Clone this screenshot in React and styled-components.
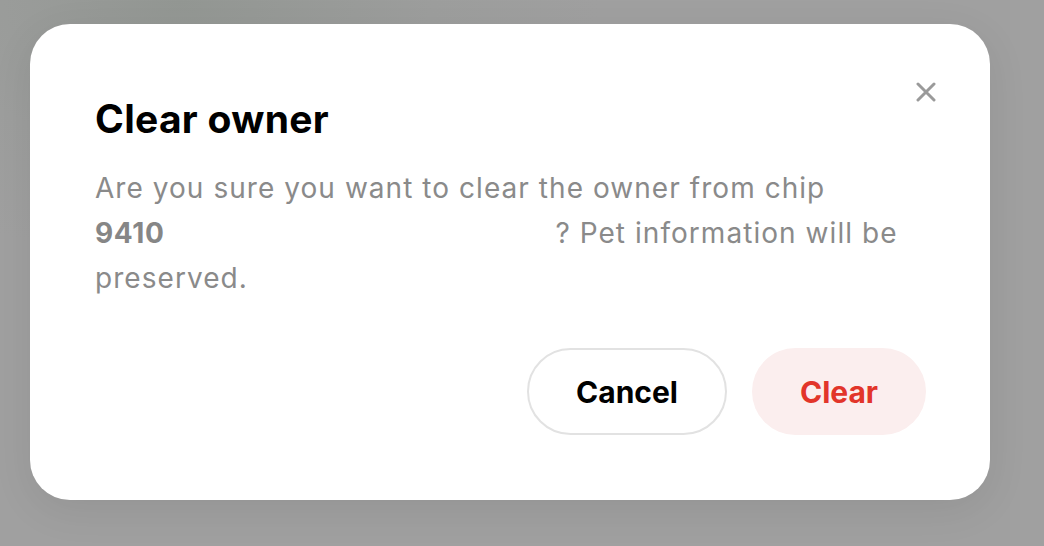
import React from "react";
import styled, { createGlobalStyle } from "styled-components";

const Global = createGlobalStyle`
  html, body { margin: 0; padding: 0; }
  body {
    width: 1044px;
    height: 546px;
    overflow: hidden;
    font-family: Inter, "Noto Sans", sans-serif;
    background: radial-gradient(ellipse 420px 260px at 180px 0px, #939793 0%, #9d9e9d 60%, #a0a0a0 100%), #a0a0a0;
  }
`;

const Backdrop = styled.div`
  width: 1044px;
  height: 546px;
  box-sizing: border-box;
  padding: 24px 0 0 30px;
`;

const Dialog = styled.div`
  position: relative;
  box-sizing: border-box;
  width: 960px;
  height: 476px;
  background: #fff;
  border-radius: 40px;
  padding: 71px 64px 65px 65px;
  display: flex;
  flex-direction: column;
  box-shadow: 0 10px 40px rgba(0, 0, 0, 0.08);
`;

const Title = styled.h2`
  margin: 0;
  font-size: 39px;
  line-height: 47px;
  font-weight: 700;
  color: #000;
  letter-spacing: 0.3px;
`;

const Message = styled.p`
  margin: 24px 0 0;
  font-size: 28px;
  line-height: 45px;
  color: #8a8a8a;
  font-weight: 400;
  letter-spacing: 1.05px;
`;

const Chip = styled.strong`
  font-weight: 700;
  color: #868686;
  letter-spacing: 0.6px;
  white-space: nowrap;
  padding-right: 391px;
`;

const CloseButton = styled.button`
  position: absolute;
  top: 56px;
  right: 52px;
  width: 24px;
  height: 24px;
  padding: 0;
  border: 0;
  background: transparent;
  display: flex;
  align-items: center;
  justify-content: center;
  cursor: pointer;
`;

const Actions = styled.div`
  margin-top: auto;
  display: flex;
  justify-content: flex-end;
  gap: 25px;
`;

const Button = styled.button`
  box-sizing: border-box;
  height: 87px;
  width: ${(p) => p.$w}px;
  border-radius: 44px;
  font-family: Inter, "Noto Sans", sans-serif;
  font-size: 30px;
  font-weight: 700;
  cursor: pointer;
  border: ${(p) => (p.$danger ? "0" : "2px solid #e2e2e2")};
  background: ${(p) => (p.$danger ? "#fbeeee" : "#fff")};
  color: ${(p) => (p.$danger ? "#e2352a" : "#000")};
`;

export default function App() {
  return (
    <>
      <Global />
      <Backdrop>
        <Dialog>
          <CloseButton aria-label="Close">
            <svg width="20" height="20" viewBox="0 0 20 20">
              <path d="M2 2 L18 18 M18 2 L2 18" stroke="#9a9a9a" strokeWidth="3" strokeLinecap="round" />
            </svg>
          </CloseButton>
          <Title>Clear owner</Title>
          <Message>
            Are you sure you want to clear the owner from chip <Chip>9410</Chip>? Pet
            information will be preserved.
          </Message>
          <Actions>
            <Button $w={200}>Cancel</Button>
            <Button $w={174} $danger>Clear</Button>
          </Actions>
        </Dialog>
      </Backdrop>
    </>
  );
}
